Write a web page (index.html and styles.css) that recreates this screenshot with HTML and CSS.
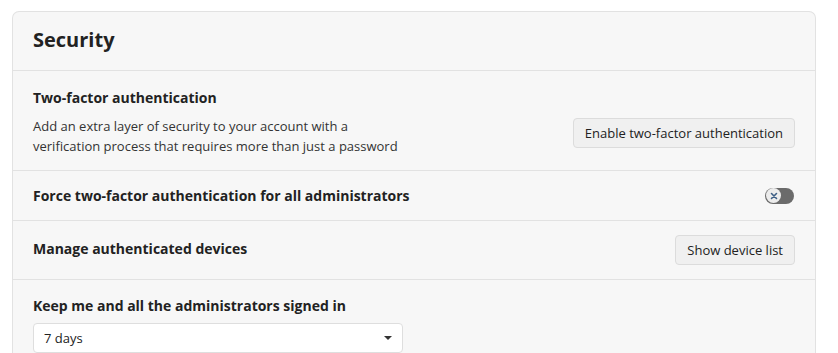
FILE: index.html
```html
<!DOCTYPE html>
<html lang="en">
<head>
    <meta charset="UTF-8">
    <title>Security settings</title>
    <meta name="viewport" content="width=device-width, initial-scale=1.0">
    <link rel="stylesheet" href="styles.css">
</head>
<body>
<div class="card">
    <div class="card-header">Security</div>

    <div class="row row-stack row-2fa">
        <div class="row-title">Two-factor authentication</div>
        <div class="row-line">
            <p class="row-desc">Add an extra layer of security to your account with a verification process that requires more than just a password</p>
            <button type="button" class="btn">Enable two-factor authentication</button>
        </div>
    </div>

    <div class="row row-force">
        <div class="row-title">Force two-factor authentication for all administrators</div>
        <span class="toggle" role="switch" aria-checked="false">
            <span class="knob">
                <svg width="10" height="10" viewBox="0 0 10 10">
                    <path d="M2.5 2.5 L7.5 7.5 M7.5 2.5 L2.5 7.5" stroke="#3d5f86" stroke-width="1.6" stroke-linecap="round"/>
                </svg>
            </span>
        </span>
    </div>

    <div class="row row-devices">
        <div class="row-title">Manage authenticated devices</div>
        <button type="button" class="btn">Show device list</button>
    </div>

    <div class="row row-stack row-session">
        <label class="row-title" for="session">Keep me and all the administrators signed in</label>
        <div class="select-wrap">
            <select id="session" class="select">
                <option>7 days</option>
                <option>14 days</option>
                <option>30 days</option>
            </select>
        </div>
    </div>
</div>
</body>
</html>
```

FILE: styles.css
```css
body {
    font-family: "Open Sans", "Noto Sans", sans-serif;
    background: #fff;
    color: #222;
    margin: 0;
    padding: 11px 22px 0 12px;
}
.card {
    background: #f7f7f7;
    border: 1px solid #e2e2e2;
    border-bottom: none;
    border-radius: 7px 7px 0 0;
}
.card-header {
    font-size: 20px;
    font-weight: 700;
    line-height: 28px;
    padding: 14px 20px 16px;
}
.row {
    border-top: 1px solid #e2e2e2;
    padding: 0 20px;
    display: flex;
    align-items: center;
    justify-content: space-between;
}
.row-stack {
    flex-direction: column;
    align-items: stretch;
}
.row-title {
    font-size: 14px;
    font-weight: 700;
    line-height: 20px;
}
.row-2fa {
    padding-top: 17px;
    padding-bottom: 14px;
}
.row-line {
    display: flex;
    align-items: center;
    justify-content: space-between;
    margin-top: 8px;
}
.row-desc {
    margin: 0;
    max-width: 380px;
    font-size: 13px;
    line-height: 20px;
    color: #333;
}
.btn {
    font-family: inherit;
    font-size: 13px;
    color: #222;
    background: #f0f0f0;
    border: 1px solid #dcdcdc;
    border-radius: 4px;
    height: 30px;
    padding: 0 11px;
    cursor: pointer;
    margin-top: -6px;
}
.row-force {
    height: 49px;
}
.row-devices {
    height: 58px;
}
.row-devices .row-title {
    margin-top: -3px;
}
.row-devices .btn {
    margin-top: 0;
}
.toggle {
    width: 29px;
    height: 16px;
    border-radius: 8px;
    background: #6b6b6b;
    display: flex;
    align-items: center;
    margin-right: 1px;
}
.knob {
    width: 15px;
    height: 15px;
    border-radius: 50%;
    background: #ececec;
    margin-left: 1px;
    display: flex;
    align-items: center;
    justify-content: center;
}
.row-session {
    padding-top: 16px;
}
.select-wrap {
    position: relative;
    width: 370px;
    margin-top: 7px;
}
.select {
    appearance: none;
    width: 100%;
    height: 30px;
    font-family: inherit;
    font-size: 13px;
    color: #222;
    background: #fff;
    border: 1px solid #dedede;
    border-radius: 4px;
    padding: 0 10px;
}
.select-wrap::after {
    content: "";
    position: absolute;
    right: 11px;
    top: 13px;
    border-left: 4px solid transparent;
    border-right: 4px solid transparent;
    border-top: 4px solid #333;
}
```
